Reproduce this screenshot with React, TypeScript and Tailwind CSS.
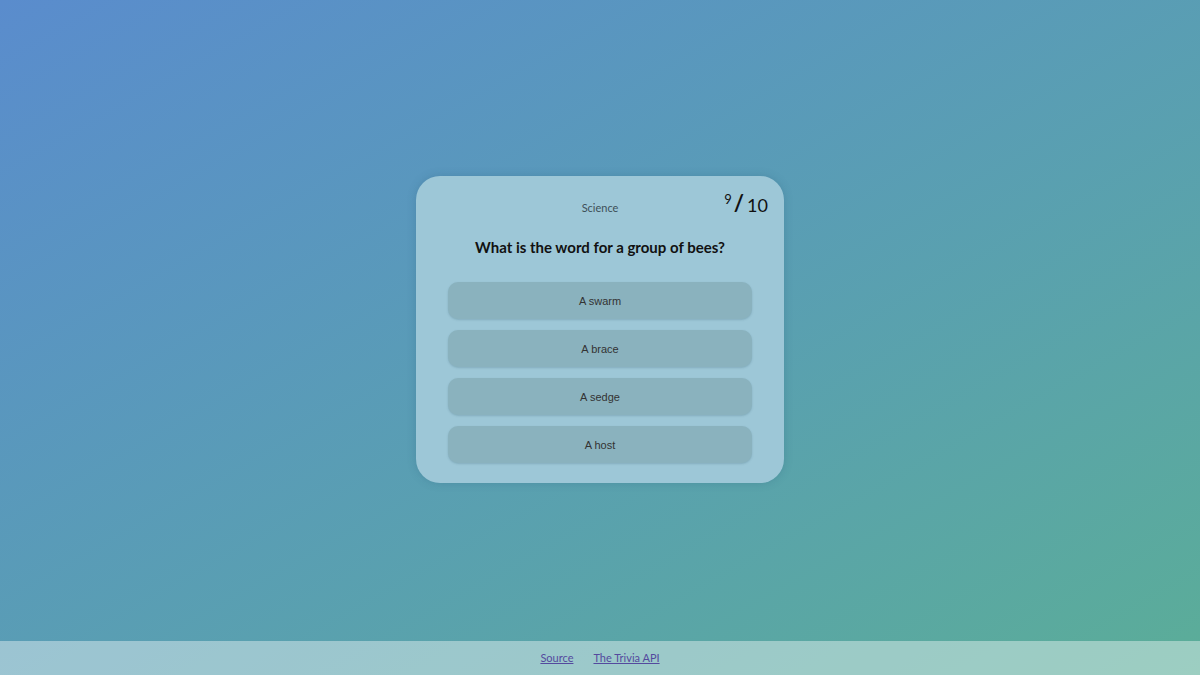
const answers = ["A swarm", "A brace", "A sedge", "A host"];

export default function App() {
  return (
    <div className="flex h-[675px] w-[1200px] flex-col bg-linear-to-br from-[#5a8ccd] to-[#5bad98] font-['Lato',sans-serif]">
      <main className="flex flex-1 items-center justify-center pt-[18px]">
        <div className="w-[368px] rounded-[24px] bg-[#9dc7d7] px-8 pt-[22px] pb-[20px] shadow-[0_0_8px_rgba(40,90,120,0.25)]">
          <div className="relative flex h-[20px] items-center justify-center">
            <span className="text-[11px] text-[#3d4f58]">Science</span>
            <span className="absolute top-[-6px] right-[-16px] flex items-start text-[#111]">
              <span className="pt-[1px] text-[13px] leading-none">9</span>
              <span className="ml-[2px] text-[22px] leading-[22px] font-bold">/</span>
              <span className="ml-[3px] pt-[3px] text-[18px] leading-[20px]">10</span>
            </span>
          </div>
          <h1 className="mt-[18px] text-center text-[15px] font-bold text-[#111]">
            What is the word for a group of bees?
          </h1>
          <div className="mt-[24px] flex flex-col gap-[11px]">
            {answers.map((a) => (
              <button
                key={a}
                className="h-[37px] w-full rounded-[10px] bg-[#8ab2be] font-['Liberation_Sans',sans-serif] text-[11px] text-[#333] shadow-[0_1px_2px_rgba(60,100,120,0.25)]"
              >
                {a}
              </button>
            ))}
          </div>
        </div>
      </main>
      <footer className="flex h-[34px] items-center justify-center gap-5 bg-white/40 pt-[1px] text-[11px]">
        <a href="#" className="text-[#54499e] underline">Source</a>
        <a href="#" className="text-[#54499e] underline">The Trivia API</a>
      </footer>
    </div>
  );
}
